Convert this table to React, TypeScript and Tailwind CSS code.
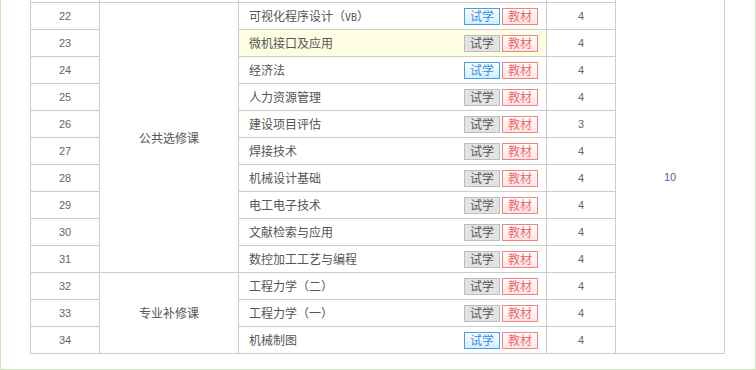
import React from 'react';

type Row = { no: number; name: React.ReactNode; trial: 'blue' | 'gray'; credit: number; hl?: boolean };

const rows: Row[] = [
  {
    no: 22,
    name: (
      <>
        可视化程序设计（<span className="font-['DejaVu_Sans_Mono',monospace] text-[10px]">VB</span>）
      </>
    ),
    trial: 'blue',
    credit: 4,
  },
  { no: 23, name: '微机接口及应用', trial: 'gray', credit: 4, hl: true },
  { no: 24, name: '经济法', trial: 'blue', credit: 4 },
  { no: 25, name: '人力资源管理', trial: 'gray', credit: 4 },
  { no: 26, name: '建设项目评估', trial: 'gray', credit: 3 },
  { no: 27, name: '焊接技术', trial: 'gray', credit: 4 },
  { no: 28, name: '机械设计基础', trial: 'gray', credit: 4 },
  { no: 29, name: '电工电子技术', trial: 'gray', credit: 4 },
  { no: 30, name: '文献检索与应用', trial: 'gray', credit: 4 },
  { no: 31, name: '数控加工工艺与编程', trial: 'gray', credit: 4 },
  { no: 32, name: '工程力学（二）', trial: 'gray', credit: 4 },
  { no: 33, name: '工程力学（一）', trial: 'gray', credit: 4 },
  { no: 34, name: '机械制图', trial: 'blue', credit: 4 },
];

const cjk = "font-['Noto_Sans_CJK_SC',sans-serif]";
const num = "font-['Liberation_Sans','Noto_Sans_CJK_SC',sans-serif] text-[11px] text-[#666]";
const cell = 'border-l border-t border-[#ccc]';

const TrialBadge = ({ kind }: { kind: 'blue' | 'gray' }) =>
  kind === 'blue' ? (
    <span className="inline-flex items-center justify-center w-[36px] h-[17px] border border-[#3fa2ea] bg-gradient-to-b from-white to-[#d6ecff] text-[#2f90e2] text-[12px] leading-none">
      试学
    </span>
  ) : (
    <span className="inline-flex items-center justify-center w-[36px] h-[17px] border border-[#bdbdbd] bg-[#e3e3e3] text-[#555] text-[12px] leading-none">
      试学
    </span>
  );

const BookBadge = () => (
  <span className="inline-flex items-center justify-center w-[36px] h-[17px] border border-[#f08484] bg-gradient-to-b from-white to-[#ffe3e3] text-[#f06a6a] text-[12px] leading-none">
    教材
  </span>
);

export default function App() {
  return (
    <div className={`w-[756px] h-[370px] bg-white border-l border-r border-b border-[#cde5b8] ${cjk}`}>
      <div className="ml-[29px] w-[695px] grid grid-cols-[69px_139px_308px_69px_110px] grid-rows-[2px_repeat(13,27px)] border-b border-[#ccc]">
        {/* strip of the row above */}
        <div className="border-l border-[#ccc]" />
        <div className="border-l border-[#ccc]" />
        <div className="border-l border-[#ccc]" />
        <div className="border-l border-[#ccc]" />
        <div className="border-l border-r border-[#ccc]" />

        {rows.map((r, i) => (
          <React.Fragment key={r.no}>
            <div className={`${cell} flex items-center justify-center ${num}`}>{r.no}</div>
            {i === 0 && (
              <div className={`${cell} row-span-10 flex items-center justify-center text-[12px] text-[#555]`}>
                公共选修课
              </div>
            )}
            {i === 10 && (
              <div className={`${cell} row-span-3 flex items-center justify-center text-[12px] text-[#555]`}>
                专业补修课
              </div>
            )}
            <div className={`${cell} flex items-center pl-[10px] pr-[8px] ${r.hl ? 'bg-[#fefee2]' : ''}`}>
              <span className="text-[12px] text-[#555]">{r.name}</span>
              <div className="ml-auto flex gap-[2px]">
                <TrialBadge kind={r.trial} />
                <BookBadge />
              </div>
            </div>
            <div className={`${cell} flex items-center justify-center ${num}`}>{r.credit}</div>
            {i === 0 && (
              <div className="row-span-13 border-l border-r border-[#ccc] flex items-center justify-center font-['Liberation_Sans',sans-serif] text-[11px] text-[#3a6ea5]">
                10
              </div>
            )}
          </React.Fragment>
        ))}
      </div>
    </div>
  );
}
